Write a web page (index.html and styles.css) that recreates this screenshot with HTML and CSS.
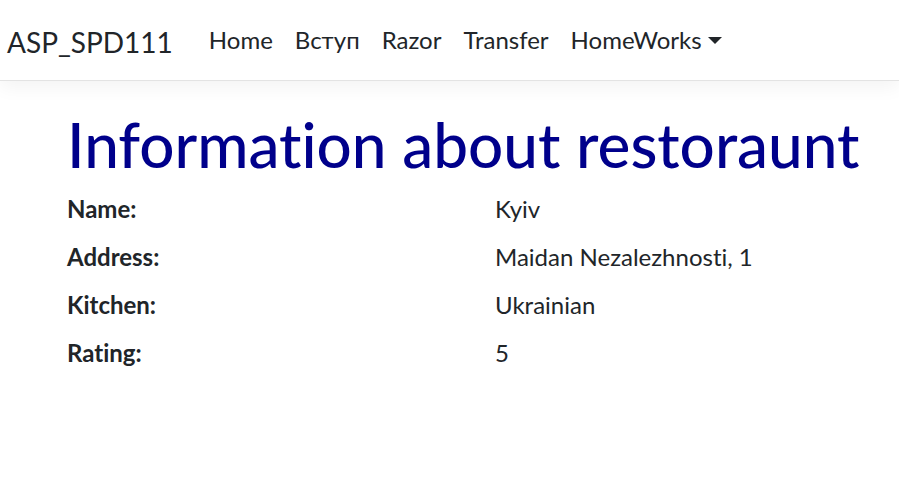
FILE: index.html
```html
<!DOCTYPE html>
<html lang="en">
<head>
<meta charset="utf-8">
<title>Information about restoraunt</title>
<link rel="stylesheet" href="styles.css">
</head>
<body>
<header class="navbar">
  <a class="brand" href="#">ASP_SPD111</a>
  <ul class="nav">
    <li><a class="nav-link" href="#">Home</a></li>
    <li><a class="nav-link" href="#">Вступ</a></li>
    <li><a class="nav-link" href="#">Razor</a></li>
    <li><a class="nav-link" href="#">Transfer</a></li>
    <li><a class="nav-link dropdown" href="#">HomeWorks<span class="caret"></span></a></li>
  </ul>
</header>
<main class="content">
  <h1 class="title">Information about restoraunt</h1>
  <dl class="details">
    <dt>Name:</dt><dd>Kyiv</dd>
    <dt>Address:</dt><dd>Maidan Nezalezhnosti, 1</dd>
    <dt>Kitchen:</dt><dd>Ukrainian</dd>
    <dt>Rating:</dt><dd>5</dd>
  </dl>
</main>
</body>
</html>
```

FILE: styles.css
```css
html, body {
  margin: 0;
  padding: 0;
  background: #fff;
}
body {
  font-family: Lato, "Liberation Sans", sans-serif;
  font-size: 24px;
  line-height: 1.5;
  color: #212529;
  font-variant-ligatures: none;
}
a {
  color: inherit;
  text-decoration: none;
}
.navbar {
  height: 80px;
  display: flex;
  align-items: center;
  padding: 0 0 0 7px;
  border-bottom: 1px solid #e3e3e3;
  box-shadow: 0 6px 18px rgba(0, 0, 0, 0.05);
}
.brand {
  font-size: 28px;
  line-height: 45px;
  margin-right: 25px;
  padding-top: 4px;
}
.nav {
  display: flex;
  list-style: none;
  margin: 0;
  padding: 0;
}
.nav-link {
  display: flex;
  align-items: center;
  padding: 0 11px;
  line-height: 36px;
}
.caret {
  display: inline-block;
  margin-left: 6px;
  width: 0;
  height: 0;
  border-top: 7px solid #212529;
  border-left: 7px solid transparent;
  border-right: 7px solid transparent;
}
.content {
  padding: 26px 0 0 67px;
}
.title {
  margin: 0 0 10px;
  font-size: 62px;
  line-height: 1.2;
  font-weight: 500;
  color: #00008b;
}
.details {
  display: grid;
  grid-template-columns: 428px 1fr;
  margin: 0;
}
.details dt,
.details dd {
  margin: 0 0 12px;
  line-height: 36px;
}
.details dt {
  font-weight: 700;
}
```
